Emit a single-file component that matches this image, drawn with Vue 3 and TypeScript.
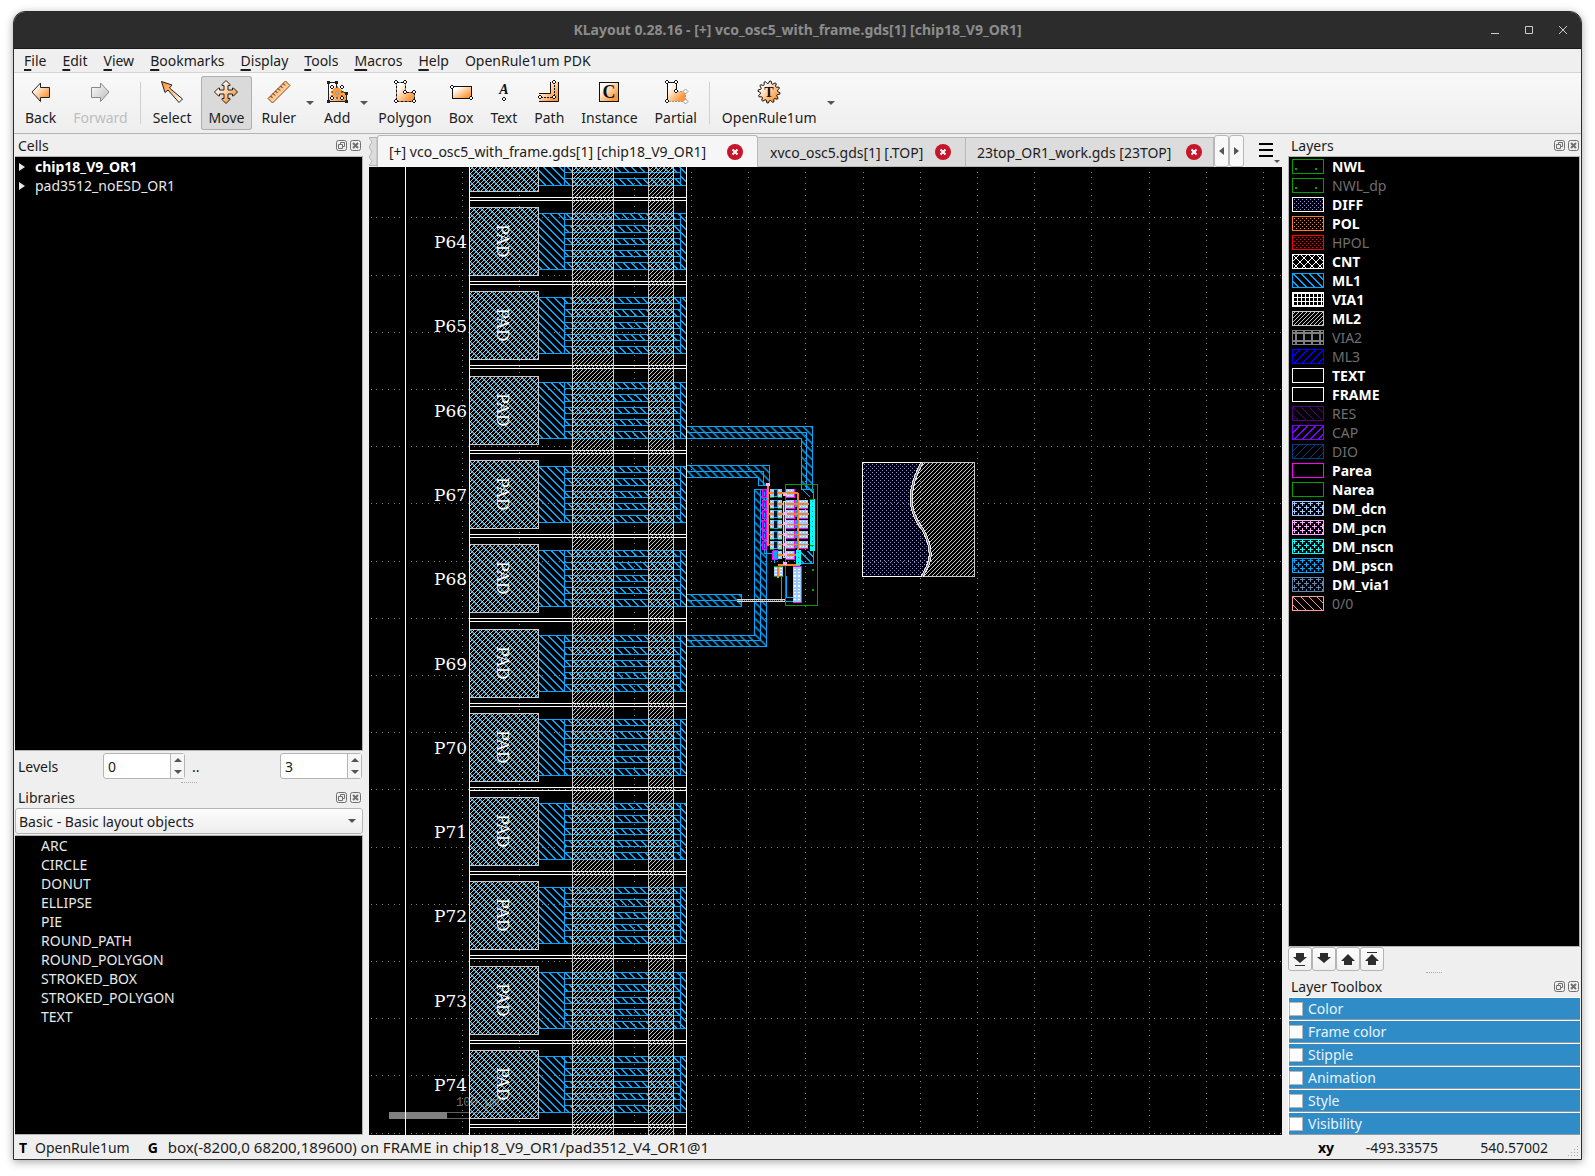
<script setup lang="ts">
import { ref } from 'vue'

interface Layer {
  name: string
  color: string
  stipple: string
  hidden?: boolean
}

const menus = ['File', 'Edit', 'View', 'Bookmarks', 'Display', 'Tools', 'Macros', 'Help']

const tools = [
  { id: 'back', label: 'Back' },
  { id: 'forward', label: 'Forward', disabled: true, sep: true },
  { id: 'select', label: 'Select' },
  { id: 'move', label: 'Move', active: true },
  { id: 'ruler', label: 'Ruler', drop: true },
  { id: 'add', label: 'Add', drop: true },
  { id: 'polygon', label: 'Polygon' },
  { id: 'box', label: 'Box' },
  { id: 'text', label: 'Text' },
  { id: 'path', label: 'Path' },
  { id: 'instance', label: 'Instance' },
  { id: 'partial', label: 'Partial', sep: true },
  { id: 'pdk', label: 'OpenRule1um', drop: true },
]

const tabs = [
  '[+] vco_osc5_with_frame.gds[1] [chip18_V9_OR1]',
  'xvco_osc5.gds[1] [.TOP]',
  '23top_OR1_work.gds [23TOP]',
]

const cells = ['chip18_V9_OR1', 'pad3512_noESD_OR1']
const library = [
  'ARC', 'CIRCLE', 'DONUT', 'ELLIPSE', 'PIE', 'ROUND_PATH',
  'ROUND_POLYGON', 'STROKED_BOX', 'STROKED_POLYGON', 'TEXT',
]
const toolbox = ['Color', 'Frame color', 'Stipple', 'Animation', 'Style', 'Visibility']
const levelFrom = ref('0')
const levelTo = ref('3')

const layers: Layer[] = [
  { name: 'NWL', color: '#00a000', stipple: 'sparse' },
  { name: 'NWL_dp', color: '#00a000', stipple: 'sparse', hidden: true },
  { name: 'DIFF', color: '#9088ff', stipple: 'dots' },
  { name: 'POL', color: '#ff8020', stipple: 'dots' },
  { name: 'HPOL', color: '#ff0000', stipple: 'dots', hidden: true },
  { name: 'CNT', color: '#ffffff', stipple: 'cross' },
  { name: 'ML1', color: '#00a8ff', stipple: 'down' },
  { name: 'VIA1', color: '#ffffff', stipple: 'grid' },
  { name: 'ML2', color: '#c8c8c8', stipple: 'fine' },
  { name: 'VIA2', color: '#808080', stipple: 'coarse', hidden: true },
  { name: 'ML3', color: '#0000ff', stipple: 'up', hidden: true },
  { name: 'TEXT', color: '#ffffff', stipple: 'none' },
  { name: 'FRAME', color: '#ffffff', stipple: 'none' },
  { name: 'RES', color: '#500080', stipple: 'thinDown', hidden: true },
  { name: 'CAP', color: '#8000ff', stipple: 'up', hidden: true },
  { name: 'DIO', color: '#004080', stipple: 'thinUp', hidden: true },
  { name: 'Parea', color: '#ff00ff', stipple: 'none' },
  { name: 'Narea', color: '#00a000', stipple: 'none' },
  { name: 'DM_dcn', color: '#9cccff', stipple: 'plus' },
  { name: 'DM_pcn', color: '#ffa8ff', stipple: 'plus' },
  { name: 'DM_nscn', color: '#00ffff', stipple: 'plus' },
  { name: 'DM_pscn', color: '#00a8ff', stipple: 'plus' },
  { name: 'DM_via1', color: '#6088b0', stipple: 'plus' },
  { name: '0/0', color: '#ff9d9d', stipple: 'thinDown', hidden: true },
]

const range = (n: number) => Array.from({ length: n }, (_, i) => i)
const px = (x: number, y: number, w = 1, h = 1) => `M${x} ${y}h${w}v${h}h${-w}z`

// Bitmap stipples: tile size and the lit pixels of each tile.
const stipples: Record<string, { w: number; h: number; d: string }> = {
  none: { w: 8, h: 8, d: '' },
  sparse: { w: 20, h: 32, d: px(3, 9, 2, 2) },
  dots: { w: 4, h: 4, d: px(0, 0) + px(2, 2) },
  cross: { w: 8, h: 8, d: range(8).map((i) => px(i, i) + px(7 - i, i)).join('') },
  down: { w: 8, h: 8, d: range(8).map((i) => px(i, i) + px((i + 1) % 8, i)).join('') },
  up: { w: 8, h: 8, d: range(8).map((i) => px(7 - i, i) + px((8 - i) % 8, i)).join('') },
  thinDown: { w: 8, h: 8, d: range(8).map((i) => px(i, i)).join('') },
  thinUp: { w: 8, h: 8, d: range(8).map((i) => px(7 - i, i)).join('') },
  fine: { w: 4, h: 4, d: range(4).map((i) => px(3 - i, i)).join('') },
  grid: { w: 4, h: 4, d: px(0, 1, 4, 1) + px(1, 0, 1, 4) },
  coarse: { w: 8, h: 8, d: px(0, 2, 8, 2) + px(3, 0, 2, 8) },
  plus: {
    w: 8, h: 8,
    d: px(0, 2, 5, 1) + px(2, 0, 1, 5) + px(4, 6, 4, 1) + px(0, 6, 1, 1) + px(6, 4, 1, 4) + px(6, 0, 1, 1),
  },
}

// Ruled background: lines of dots ten to a grid step.
const step = 57.2
const gridPath = (() => {
  let d = ''
  for (let n = -6; n < 154; n++) {
    const x = Math.round(405 + (n * step) / 10)
    for (let k = -1; k < 17; k++) d += px(x, Math.round(217.4 + k * step))
  }
  for (let n = -10; n < 162; n++) {
    const y = Math.round(217.4 + (n * step) / 10)
    for (let k = 0; k < 16; k++) d += px(Math.round(405 + k * step), y)
  }
  return d
})()

const pads = range(12).map((i) => ({ name: `P${63 + i}`, y: Math.round(122.8 + i * 84.3) }))
const fingers = [[0, 6], [12, 7], [25, 6], [37, 6], [49, 7]]

const wires = [
  { d: 'M686 426H812V489H801V438H686', c: 'M686 432H806V489' },
  { d: 'M686 465H769V485H758V477H686', c: 'M686 471H763V485' },
  { d: 'M686 635H754V489H766V646H686', c: 'M686 640H760V489' },
  { d: 'M686 594H741V606H686', c: 'M686 600H741' },
]

// Oscillator core, in thirds of a pixel.
const rows = [267, 300, 330, 361, 392, 422, 453]
const gear = range(48).map((i) => {
  const r = i % 4 < 2 ? 11 : 8.6
  const a = ((i + 0.5) * Math.PI) / 24
  return `${(12 + r * Math.cos(a)).toFixed(1)},${(12 + r * Math.sin(a)).toFixed(1)}`
}).join(' ')

const nodes: Record<string, number[][]> = {
  polygon: [[3, 2], [12, 2], [12, 12], [21, 12], [21, 21], [3, 21]],
  box: [[3, 7], [22, 18]],
  text: [[12, 19]],
  path: [[17, 2], [17, 17], [3, 17]],
  add: [[7, 7], [17, 7], [7, 18], [17, 18]],
  partial: [[3, 2], [12, 2], [12, 11], [3, 21]],
}
const diamond = ([x, y]: number[]) => `M${x} ${y - 2}L${x + 2} ${y}L${x} ${y + 2}L${x - 2} ${y}Z`
</script>

<template>
  <div class="desktop">
    <div class="window">
      <header class="titlebar">
        <h1>KLayout 0.28.16 - [+] vco_osc5_with_frame.gds[1] [chip18_V9_OR1]</h1>
        <div class="winbtns">
          <button aria-label="Minimize"><svg width="10" height="10"><path d="M1 8.500h8" /></svg></button>
          <button aria-label="Maximize"><svg width="10" height="10"><path d="M1.500 1.500h7v7h-7z" /></svg></button>
          <button aria-label="Close"><svg width="10" height="10"><path d="M1 1l8 8M9 1l-8 8" /></svg></button>
        </div>
      </header>

      <nav class="menubar">
        <button v-for="m in menus" :key="m"><u>{{ m[0] }}</u>{{ m.slice(1) }}</button>
        <button>OpenRule1um PDK</button>
      </nav>

      <div class="toolbar">
        <template v-for="t in tools" :key="t.id">
          <button class="tool" :class="{ active: t.active }" :disabled="t.disabled">
            <svg width="24" height="24" viewBox="0 0 24 24">
              <path v-if="t.id === 'back'" d="M3 12L11.500 3V7.500H20.500V17.500H11.500V21.500Z" fill="url(#og)" stroke="#222" />
              <path v-else-if="t.id === 'forward'" d="M21 12L12.500 3V7.500H3.500V17.500H12.500V21.500Z" fill="url(#gg)" stroke="#8a8a8a" />
              <path v-else-if="t.id === 'select'" d="M1.500 1.500L12 5L9.500 8L22.500 19L19 22.500L8 10L5 12.500Z" fill="url(#or)" stroke="#222" />
              <path v-else-if="t.id === 'move'" d="M12 .5L16 4.500V5.500H14V10H18.500V8H19.500L23.500 12L19.500 16H18.500V14H14V18.500H16V19.500L12 23.500L8 19.500V18.500H10V14H5.500V16H4.500L.5 12L4.500 8H5.500V10H10V5.500H8V4.500Z" fill="url(#og)" stroke="#222" />
              <template v-else-if="t.id === 'ruler'">
                <path d="M1 18.500L18.500 1L23 5.500L5.500 23Z" fill="url(#or)" stroke="#8a4a10" />
                <path d="M3.500 16l2 2M6 13.500l2 2M8.500 11l2 2M11 8.500l2 2M13.500 6l2 2M16 3.500l2 2" stroke="#222" />
              </template>
              <template v-else-if="t.id === 'add'">
                <path d="M3.500 2.500H11.500V8.500L21.500 13.500V21.500H3.500Z" fill="url(#og)" stroke="#222" />
                <circle cx="12" cy="12.500" r="5" fill="#ff9933" />
                <path d="M7 7H17M7 18H17M7 7V18M17 7V18" stroke="#222" stroke-dasharray="2 2" fill="none" />
                <circle cx="12" cy="13" r="1.500" fill="#bbb" stroke="#999" />
                <path d="M2 1h3v3H2zM10 1h3v3h-3zM20 12h3v3h-3zM20 20h3v3h-3zM2 20h3v3H2z" fill="#222" />
              </template>
              <path v-else-if="t.id === 'polygon'" d="M3.500 2.500H12.500V12.500H21.500V21.500H3.500Z" fill="url(#og)" stroke="#111" stroke-dasharray="3 1" />
              <rect v-else-if="t.id === 'box'" x="3.500" y="6.500" width="19" height="12" fill="url(#og)" stroke="#111" />
              <text v-else-if="t.id === 'text'" x="12" y="14" class="glyph italic">A</text>
              <template v-else-if="t.id === 'path'">
                <path d="M13.500 2V13.500H2V21.500H21.500V2Z" fill="url(#og)" />
                <path d="M13.500 2V13.500H2M21.500 2V21.500H2" fill="none" stroke="#111" />
                <path d="M17.500 2V17.500H3" fill="none" stroke="#111" stroke-dasharray="2 1" />
              </template>
              <template v-else-if="t.id === 'instance'">
                <rect x="2.500" y="2.500" width="19" height="19" fill="url(#og)" stroke="#111" />
                <text x="12" y="18" class="glyph big">C</text>
              </template>
              <template v-else-if="t.id === 'partial'">
                <path d="M3.500 2.500H12.500V11.500H21.500V21.500H3.500Z" fill="url(#og)" />
                <path d="M12.500 11.500V2.500H3.500V21.500" fill="none" stroke="#111" />
                <path d="M13 11.500H21.500V21.500H4" fill="none" stroke="#999" stroke-dasharray="2 1" />
                <path d="M21.500 9l2.500 2.500-2.500 2.500-2.500-2.500zM21.500 19l2.500 2.500-2.500 2.500-2.500-2.500z" fill="#fff" stroke="#999" />
              </template>
              <template v-else>
                <polygon :points="gear" fill="url(#og)" stroke="#111" />
                <text x="12" y="17" class="glyph">T</text>
              </template>
              <path v-for="(n, i) in nodes[t.id]" :key="i" :d="diamond(n)" fill="#fff" stroke="#111" />
            </svg>
            <span>{{ t.label }}</span>
          </button>
          <button v-if="t.drop" class="drop" :aria-label="t.label + ' menu'"><i class="tri down"></i></button>
          <span v-if="t.sep" class="sep"></span>
        </template>
      </div>

      <main class="body">
        <aside class="left">
          <div class="docktitle">
            <h2>Cells</h2>
            <button v-for="k in ['float', 'close']" :key="k" :aria-label="k"><svg width="11" height="11"><rect x=".5" y=".5" width="10" height="10" rx="2" /><path v-if="k === 'float'" d="M4.500 4V2.500h4v4H7M2.500 4.500h4v4h-4z" /><path v-else d="M3 3l5 5M8 3l-5 5" stroke-width="2" /></svg></button>
          </div>
          <ul class="list tree">
            <li v-for="(c, i) in cells" :key="c" :class="{ bold: i === 0 }"><i class="tri east"></i>{{ c }}</li>
          </ul>
          <div class="levels">
            <label for="lv0">Levels</label>
            <div class="spin">
              <input id="lv0" v-model="levelFrom" type="text">
              <span><button aria-label="Up"><i class="tri up"></i></button><button aria-label="Down"><i class="tri down"></i></button></span>
            </div>
            <label class="dots2" for="lv1">..</label>
            <div class="spin">
              <input id="lv1" v-model="levelTo" type="text">
              <span><button aria-label="Up"><i class="tri up"></i></button><button aria-label="Down"><i class="tri down"></i></button></span>
            </div>
          </div>
          <div class="handle"></div>
          <div class="docktitle lower">
            <h2>Libraries</h2>
            <button v-for="k in ['float', 'close']" :key="k" :aria-label="k"><svg width="11" height="11"><rect x=".5" y=".5" width="10" height="10" rx="2" /><path v-if="k === 'float'" d="M4.500 4V2.500h4v4H7M2.500 4.500h4v4h-4z" /><path v-else d="M3 3l5 5M8 3l-5 5" stroke-width="2" /></svg></button>
          </div>
          <div class="combo">
            <select aria-label="Library"><option>Basic - Basic layout objects</option></select>
            <i class="tri down"></i>
          </div>
          <ul class="list lib">
            <li v-for="l in library" :key="l">{{ l }}</li>
          </ul>
        </aside>

        <section class="center">
          <div class="tabbar">
            <svg class="torn" width="8" height="29"><path d="M0 .5H8V28.500H0L3 24L0 20L3 15L0 10L3 5Z" fill="#dcdcdc" stroke="#b4b4b4" /></svg>
            <div v-for="(t, i) in tabs" :key="t" class="tab" :class="{ current: i === 0 }">
              <a href="#">{{ t }}</a>
              <button aria-label="Close tab"><svg width="16" height="16"><circle cx="8" cy="8" r="8" fill="#c7162b" /><path d="M5.500 5.500l5 5M10.500 5.500l-5 5" stroke="#fff" stroke-width="2" /></svg></button>
            </div>
            <button class="scroll" aria-label="Previous tabs"><svg width="5" height="8"><path d="M5 0V8L0 4z" fill="#555" /></svg></button>
            <button class="scroll" aria-label="Next tabs"><svg width="5" height="8"><path d="M0 0V8L5 4z" fill="#555" /></svg></button>
            <button class="burger" aria-label="Views"><svg width="24" height="24"><path d="M1 4h14M1 10h14M1 16h14" stroke="#000" stroke-width="2" /><path d="M16 20h6l-3 3z" fill="#555" /></svg></button>
          </div>

          <svg class="canvas" shape-rendering="crispEdges">
            <defs>
              <linearGradient id="og" x1="0" y1="0" x2="1" y2="1"><stop offset=".2" stop-color="#fff" /><stop offset=".8" stop-color="#ff9a3c" /></linearGradient>
              <linearGradient id="or" x1="0" y1="0" x2="1" y2="1"><stop offset="0" stop-color="#ff8a20" /><stop offset="1" stop-color="#fff" /></linearGradient>
              <linearGradient id="gg" x1="0" y1="0" x2="1" y2="1"><stop offset="0" stop-color="#fff" /><stop offset="1" stop-color="#bbb" /></linearGradient>
              <pattern v-for="(l, i) in layers" :id="'st' + i" :key="i" patternUnits="userSpaceOnUse" :width="stipples[l.stipple].w" :height="stipples[l.stipple].h">
                <path :d="stipples[l.stipple].d" :fill="l.color" />
              </pattern>
            </defs>
            <g transform="translate(-369 -167)">
              <path :d="gridPath" fill="#808080" />
              <text x="456" y="1106" class="scale">100 µm</text>
              <rect x="389" y="1112" width="58" height="7" fill="#808080" />
              <path d="M447 1112.500H504M447 1118.500H504" stroke="#606060" />

              <g v-for="p in pads" :key="p.name">
                <rect x="538.500" :y="p.y + 6.500" width="26" height="56" fill="url(#st6)" class="ml1" />
                <rect v-for="f in fingers" :key="f[0]" x="564.500" :y="p.y + 6.500 + f[0]" width="116" :height="f[1]" fill="url(#st6)" class="ml1" />
                <rect x="680.500" :y="p.y + 6.500" width="6" height="56" fill="url(#st6)" class="ml1" />
                <rect x="469.500" :y="p.y + .5" width="69" height="68" fill="url(#st6)" />
                <rect x="469.500" :y="p.y + .5" width="69" height="68" fill="url(#st8)" class="ml2" />
                <template v-if="p.y > 167">
                  <text x="434" :y="p.y + 41" class="pin">{{ p.name }}</text>
                  <text class="pad" :transform="`translate(497 ${p.y + 17}) rotate(90)`">PAD</text>
                </template>
                <path :d="`M469 ${p.y + 74.5}H686M469 ${p.y + 77.5}H686`" stroke="#fff" />
              </g>
              <rect x="572.500" y="160" width="41" height="990" fill="url(#st8)" class="ml2" />
              <rect x="648.500" y="160" width="25" height="990" fill="url(#st8)" class="ml2" />
              <path d="M405.500 160V1140M469.500 160V1140M686.500 160V1140" stroke="#fff" />

              <g v-for="w in wires" :key="w.d" transform="translate(.5 .5)">
                <path :d="w.d" fill="url(#st6)" class="ml1" />
                <path :d="w.c" fill="none" class="ml1" />
              </g>

              <path d="M862.500 462.500H922C906 492 909 512 923 530C935 552 930 564 922 576.500H862.500Z" fill="url(#st2)" />
              <path d="M922 462.500C906 492 909 512 923 530C935 552 930 564 922 576.500H974.500V462.500Z" fill="url(#st8)" class="ml2" />
              <path d="M922 462.500C906 492 909 512 923 530C935 552 930 564 922 576.500" fill="none" stroke="#e8e8e8" stroke-width="3" />
              <path d="M922 462.500C906 492 909 512 923 530C935 552 930 564 922 576.500" fill="none" stroke="#888" stroke-width="1" />
              <path d="M922 462.500H862.500V576.500H922" fill="none" stroke="#fff" />

              <path d="M801.500 489.500H813.500V500M800.500 551.500V563.500H813.500V551" fill="url(#st6)" class="ml1" />
              <path d="M781.500 576V601.500H793M786.500 576V597.500H793M764.500 489V553.500H774.500V563" fill="none" class="ml1" />

              <g transform="translate(670 400) scale(.33333)">
                <rect x="346" y="253" width="97" height="363" fill="none" stroke="#00a000" stroke-width="3" />
                <path d="M426 507h6v6h-6zM426 567h6v6h-6zM426 268h6v6h-6z" fill="#00a000" />
                <path d="M202 598H345M202 604H345" stroke="#d8d8d8" stroke-width="3" />
                <path d="M205 601H345" stroke="#888" stroke-width="3" stroke-dasharray="3 3" />
                <path d="M294 257V437M384 279V495M324 494H390" stroke="#ff8020" stroke-width="6" fill="none" />
                <path d="M309 453h15v27h-15z" fill="#00a8ff" stroke="#ff00ff" stroke-width="3" />
                <g v-for="(y, i) in rows" :key="y">
                  <rect v-if="i < 6" x="278" :y="y + 2" width="11" :height="25" fill="#0050a0" stroke="#ff00ff" stroke-width="3" />
                  <rect v-if="i < 6" x="281" :y="y + 9" width="5" height="12" fill="#00a8ff" />
                  <path v-if="i < 6" :d="`M300 ${y + 26}h12M324 ${y + 26}h12`" stroke="#00a000" stroke-width="3" />
                  <path v-if="i < 6" :d="`M312 ${y + 2}h12v22h-12z`" fill="#001830" stroke="#00a8ff" stroke-width="3" />
                  <path v-if="i < 6" :d="`M300 ${y}h12v24h-12z`" fill="#9cccff" />
                  <path :d="`M324 ${y}h12v24h-12z`" fill="#9cccff" />
                  <path :d="`M348 ${y}h27v24h-27z`" fill="#9cccff" />
                  <path :d="`M348 ${y + 25}h27v-25`" fill="none" stroke="#ff00ff" stroke-width="3" />
                  <path v-if="i > 0 && i < 6" :d="`M387 ${y}h27v24h-27z`" fill="#9cccff" />
                  <path v-if="i > 0 && i < 6" :d="`M387 ${y + 25}h27`" stroke="#ff00ff" stroke-width="3" />
                  <path v-if="i > 0 && i < 6" :d="`M376 ${y}h9v22h-9z`" fill="#00a8ff" />
                  <path v-if="i < 6" :d="`M294 ${y + 12}h18`" stroke="#ff8020" stroke-width="4" />
                  <path :d="`M324 ${y + 12}h60`" stroke="#ff8020" stroke-width="4" />
                  <path v-if="i > 0 && i < 6" :d="`M386 ${y + 12}h31`" stroke="#ff8020" stroke-width="4" />
                  <path :d="`M327 ${y + 5}h8M353 ${y + 5}h20M327 ${y + 19}h8M353 ${y + 19}h20`" stroke="#fff" stroke-width="3" stroke-dasharray="3 6" />
                  <path v-if="i > 0 && i < 6" :d="`M303 ${y + 5}h8M303 ${y + 19}h8M391 ${y + 5}h20M391 ${y + 19}h20`" stroke="#fff" stroke-width="3" stroke-dasharray="3 6" />
                </g>
                <path d="M341 304h6v170h-6z" fill="#444" stroke="#d8d8d8" stroke-width="3" />
                <path d="M339 279h12v8h-12zM339 337h12v8h-12zM339 367h12v8h-12zM339 400h12v8h-12zM339 430h12v8h-12zM339 459h12v8h-12zM339 487h12v8h-12zM288 249h12v8h-12z" fill="#ffb0f8" />
                <path d="M421 297h14v156h-14zM378 450h14v45h-14z" fill="#00ffff" />
                <path d="M427 303v147M385 456v36" stroke="#008080" stroke-width="3" stroke-dasharray="3 12" />
                <path d="M421 299h12M421 436h12" stroke="#00a000" stroke-width="3" />
                <path d="M312 500h27v29h-27z" fill="#9cccff" />
                <path d="M312 499h27M312 529h27" stroke="#00a000" stroke-width="3" />
                <path d="M324 500v33" stroke="#ff8020" stroke-width="4" />
                <path d="M318 504v24M333 504v24" stroke="#fff" stroke-width="4" stroke-dasharray="3 6" />
                <path d="M369 499h26v109h-26z" fill="#9cccff" />
                <path d="M369 499h26v108h-26" fill="none" stroke="#ff00ff" stroke-width="3" />
                <path d="M375 506v99M387 506v99" stroke="#fff" stroke-width="5" stroke-dasharray="4 6" />
              </g>
            </g>
          </svg>
        </section>

        <aside class="right">
          <div class="docktitle">
            <h2>Layers</h2>
            <button v-for="k in ['float', 'close']" :key="k" :aria-label="k"><svg width="11" height="11"><rect x=".5" y=".5" width="10" height="10" rx="2" /><path v-if="k === 'float'" d="M4.500 4V2.500h4v4H7M2.500 4.500h4v4h-4z" /><path v-else d="M3 3l5 5M8 3l-5 5" stroke-width="2" /></svg></button>
          </div>
          <ul class="list layers">
            <li v-for="(l, i) in layers" :key="l.name" :class="{ off: l.hidden }">
              <svg width="32" height="15" shape-rendering="crispEdges"><rect x=".5" y=".5" width="31" height="14" :fill="`url(#st${i})`" :stroke="l.name === 'DIFF' ? '#fff' : l.color" /></svg>
              {{ l.name }}
            </li>
          </ul>
          <div class="order">
            <button aria-label="To bottom"><svg width="16" height="16"><path d="M4 2h8v4h3l-7 6-7-6h3zM3 14h10v1H3z" /></svg></button>
            <button aria-label="Down"><svg width="16" height="16"><path d="M4 2h8v4h3l-7 6-7-6h3z" /></svg></button>
            <button aria-label="Up"><svg width="16" height="16"><path d="M4 14h8v-4h3L8 3l-7 7h3z" /></svg></button>
            <button aria-label="To top"><svg width="16" height="16"><path d="M4 14h8v-4h3L8 3l-7 7h3zM3 1h10v1H3z" /></svg></button>
          </div>
          <div class="handle"></div>
          <div class="docktitle">
            <h2>Layer Toolbox</h2>
            <button v-for="k in ['float', 'close']" :key="k" :aria-label="k"><svg width="11" height="11"><rect x=".5" y=".5" width="10" height="10" rx="2" /><path v-if="k === 'float'" d="M4.500 4V2.500h4v4H7M2.500 4.500h4v4h-4z" /><path v-else d="M3 3l5 5M8 3l-5 5" stroke-width="2" /></svg></button>
          </div>
          <div class="toolbox">
            <label v-for="t in toolbox" :key="t"><input type="checkbox">{{ t }}</label>
          </div>
        </aside>
      </main>

      <footer class="status">
        <b>T</b><span>OpenRule1um</span>
        <b class="g">G</b><span class="msg">box(-8200,0 68200,189600) on FRAME in chip18_V9_OR1/pad3512_V4_OR1@1</span>
        <b class="xy">xy</b><span class="num x">-493.33575</span><span class="num">540.57002</span>
        <svg width="12" height="12" class="grip"><path d="M9 1h1v1H9zM6 4h1v1H6zM9 4h1v1H9zM3 7h1v1H3zM6 7h1v1H6zM9 7h1v1H9zM0 10h1v1H0zM3 10h1v1H3zM6 10h1v1H6zM9 10h1v1H9z" fill="#aaa" /></svg>
      </footer>
    </div>
  </div>
</template>

<style>
body {
  margin: 0;
  background: #fff;
}
</style>

<style scoped>
* {
  box-sizing: border-box;
}
.desktop {
  min-height: 100vh;
  padding: 11px 13px 16px;
  display: flex;
  font: 14px/19px 'Noto Sans', 'Open Sans', sans-serif;
  color: #1c1c1c;
}
.window {
  flex: 1;
  min-width: 0;
  display: flex;
  flex-direction: column;
  background: #efefef;
  border: 1px solid #2c2c2c;
  border-radius: 12px 12px 0 0;
  box-shadow: 0 2px 8px rgba(0, 0, 0, 0.35);
  overflow: hidden;
}
button,
input,
select {
  font: inherit;
  color: inherit;
  margin: 0;
  padding: 0;
  border: 0;
  background: none;
}
h1,
h2,
ul {
  margin: 0;
  padding: 0;
  font-size: 14px;
  font-weight: 400;
  list-style: none;
}
a {
  color: inherit;
  text-decoration: none;
}
.titlebar {
  height: 37px;
  flex: none;
  display: grid;
  grid-template-columns: 1fr auto 1fr;
  align-items: center;
  padding-bottom: 1px;
  background: #2c2c2c;
  border-bottom: 1px solid #191919;
}
.titlebar h1 {
  grid-column: 2;
  font-weight: 700;
  color: #8c8c8c;
}
.winbtns {
  display: flex;
  justify-content: flex-end;
  gap: 24px;
  padding-right: 13px;
}
.winbtns button {
  display: flex;
}
.winbtns svg {
  stroke: #ccc;
  fill: none;
}
.menubar {
  flex: none;
  height: 24px;
  display: flex;
  gap: 16px;
  padding: 0 10px;
  border-bottom: 1px solid #d4d4d4;
}
.menubar u {
  text-decoration-thickness: 2px;
  text-underline-offset: 3px;
}
.toolbar {
  flex: none;
  height: 61px;
  display: flex;
  align-items: center;
  gap: 1px;
  padding: 0 3px;
  background: linear-gradient(#f9f9f9, #eeeeee);
  border-bottom: 1px solid #b4b4b4;
}
.tool {
  height: 54px;
  padding: 4px 8px 0;
  display: flex;
  flex-direction: column;
  align-items: center;
  gap: 4px;
  border-radius: 3px;
  line-height: 19px;
}
.tool svg {
  overflow: visible;
}
.tool.active {
  background: #dadada;
  box-shadow: inset 0 0 0 1px #b0b0b0;
}
.tool:disabled {
  color: #bebebe;
}
.glyph {
  font: bold 14px 'Liberation Serif', serif;
  text-anchor: middle;
  fill: #111;
}
.glyph.big {
  font-size: 18px;
}
.glyph.italic {
  font-style: italic;
}
.sep {
  width: 1px;
  height: 42px;
  margin: 0 3px;
  background: #d0d0d0;
}
.drop {
  width: 10px;
  height: 54px;
  display: flex;
  align-items: center;
  justify-content: center;
}
.tri {
  display: block;
  border: 4px solid transparent;
}
.tri.down {
  border-top-color: #555;
  border-bottom: 0;
}
.tri.up {
  border-bottom-color: #555;
  border-top: 0;
}
.tri.east {
  border-left: 6px solid #e8e8e8;
  border-right: 0;
}
.body {
  flex: 1;
  min-height: 0;
  display: flex;
  padding: 3px 1px 0;
}
.left {
  width: 348px;
  flex: none;
  display: flex;
  flex-direction: column;
}
.right {
  width: 292px;
  flex: none;
  display: flex;
  flex-direction: column;
}
.center {
  flex: 1;
  min-width: 0;
  display: flex;
  flex-direction: column;
  margin: -3px 6px 0;
}
.docktitle {
  flex: none;
  height: 19px;
  display: flex;
  align-items: center;
  gap: 3px;
  padding: 0 1px 2px 3px;
}
.left .docktitle {
  padding-right: 2px;
}
.docktitle.lower {
  padding-bottom: 0;
}
.docktitle h2 {
  flex: 1;
}
.docktitle button {
  display: flex;
}
.docktitle svg {
  fill: none;
  stroke: #707070;
}
.list {
  background: #000;
  color: #e8e8e8;
  border: 1px solid #b4b4b4;
  border-left: 0;
}
.list li {
  height: 19px;
  display: flex;
  align-items: center;
}
.tree {
  height: 595px;
  flex: none;
  padding-left: 4px;
}
.tree li {
  gap: 10px;
}
.bold {
  font-weight: 700;
  color: #fff;
}
.levels {
  flex: none;
  height: 31px;
  display: flex;
  align-items: center;
  padding: 0 1px 1px 3px;
}
.levels label:first-child {
  width: 85px;
}
.levels .dots2 {
  flex: 1;
  padding-left: 7px;
}
.spin {
  width: 82px;
  height: 26px;
  display: flex;
  background: #fff;
  border: 1px solid #b4b4b4;
  border-radius: 3px;
}
.spin input {
  flex: 1;
  min-width: 0;
  padding-left: 4px;
}
.spin span {
  width: 14px;
  display: flex;
  flex-direction: column;
  border-left: 1px solid #b4b4b4;
  background: #f6f6f6;
}
.spin button {
  flex: 1;
  display: flex;
  align-items: center;
  justify-content: center;
}
.handle {
  flex: none;
  width: 16px;
  height: 6px;
  margin: 0 auto;
  border-top: 1px dotted #aaa;
}
.combo {
  position: relative;
  flex: none;
  height: 27px;
  margin-top: 1px;
}
.combo select {
  appearance: none;
  width: 100%;
  height: 26px;
  padding: 0 3px;
  border: 1px solid #b4b4b4;
  border-radius: 3px;
  background: linear-gradient(#fdfdfd, #ededed);
}
.combo .tri {
  position: absolute;
  right: 7px;
  top: 11px;
  pointer-events: none;
}
.lib {
  flex: 1;
}
.lib li {
  padding-left: 26px;
}
.tabbar {
  flex: none;
  height: 33px;
  display: flex;
  align-items: flex-end;
}
.torn {
  flex: none;
  margin-bottom: 1px;
}
.tab {
  flex: none;
  width: 248px;
  height: 30px;
  display: flex;
  align-items: center;
  justify-content: space-between;
  padding: 0 11px;
  background: #dcdcdc;
  border: 1px solid #b8b8b8;
  border-left: 0;
  white-space: nowrap;
}
.tab.current {
  width: 381px;
  height: 32px;
  padding-right: 14px;
  background: #f6f6f6;
  border-left: 1px solid #b8b8b8;
  border-bottom: 0;
  border-radius: 3px 3px 0 0;
}
.tab.current + .tab {
  width: 208px;
  padding: 0 14px 0 12px;
}
.tab button {
  display: flex;
}
.scroll {
  flex: none;
  width: 15px;
  height: 32px;
  display: flex;
  align-items: center;
  justify-content: center;
  background: #f8f8f8;
  border: 1px solid #b8b8b8;
  border-radius: 3px;
}
.burger {
  margin-left: auto;
  display: flex;
  padding-bottom: 3px;
}
.canvas {
  flex: 1;
  width: 100%;
  min-height: 0;
  background: #000;
}
.ml1 {
  stroke: #00a8ff;
}
.ml2 {
  stroke: #c8c8c8;
}
.pin {
  font: 17px 'DejaVu Serif', serif;
  fill: #fff;
}
.pad {
  font: 16px 'DejaVu Serif', serif;
  fill: #fff;
}
.scale {
  font: 12px 'Liberation Mono', monospace;
  fill: #707070;
}
.layers {
  flex: 1;
  padding-left: 3px;
  border-left: 1px solid #b4b4b4;
}
.layers li {
  gap: 8px;
  font-weight: 700;
  color: #fff;
}
.layers .off {
  font-weight: 400;
  color: #6e6e6e;
}
.order {
  flex: none;
  height: 25px;
  display: flex;
}
.order button {
  width: 24px;
  height: 24px;
  display: flex;
  align-items: center;
  justify-content: center;
  background: linear-gradient(#fdfdfd, #f0f0f0);
  border: 1px solid #b4b4b4;
  border-radius: 3px;
}
.order svg {
  fill: #2c2c2c;
}
.toolbox {
  flex: none;
  color: #e8f4fc;
  border-left: 1px solid #fff;
}
.toolbox label {
  height: 23px;
  display: flex;
  align-items: center;
  gap: 5px;
  background: #308cc6;
  border-top: 1px solid #fff;
  border-bottom: 1px solid #8a9aa8;
}
.toolbox input {
  appearance: none;
  width: 14px;
  height: 14px;
  background: #fff;
  border: 1px solid #b4b4b4;
}
.status {
  flex: none;
  height: 24px;
  display: flex;
  align-items: center;
  padding: 0 1px 0 5px;
  white-space: nowrap;
}
.status b {
  width: 16px;
  color: #000;
}
.status .g {
  width: 20px;
  margin-left: 18px;
}
.status .msg {
  font-size: 15px;
}
.status .xy {
  margin-left: auto;
}
.status .num {
  width: 110px;
  text-align: right;
}
.status .x {
  width: 104px;
}
.grip {
  margin: 8px 0 0 20px;
}
</style>
